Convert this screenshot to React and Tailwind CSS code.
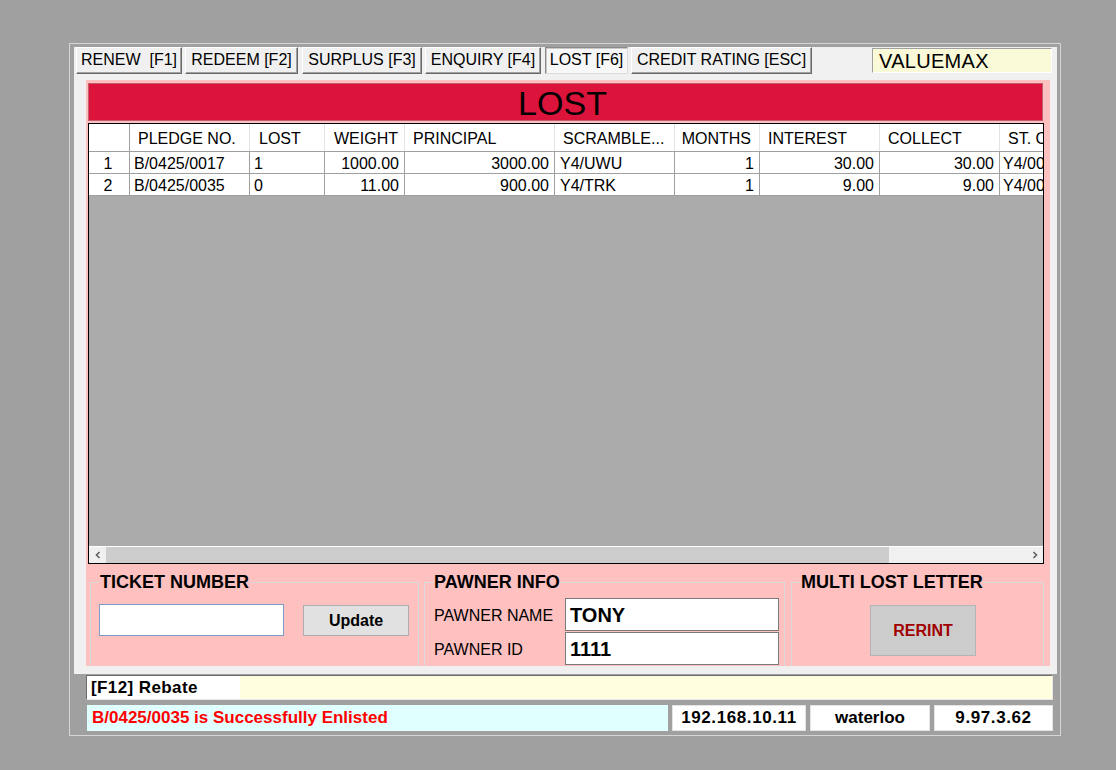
import React from "react";

const cols = [
  { key: "n", label: "", w: "w-[41px]", h: "", d: "justify-center pr-[2px]" },
  { key: "p", label: "PLEDGE NO.", w: "w-[120px]", h: "justify-start pl-[8px]", d: "justify-start pl-[4px]" },
  { key: "l", label: "LOST", w: "w-[75px]", h: "justify-start pl-[9px]", d: "justify-start pl-[4px]" },
  { key: "w", label: "WEIGHT", w: "w-[80px]", h: "justify-end pr-[6px]", d: "justify-end pr-[5px]" },
  { key: "pr", label: "PRINCIPAL", w: "w-[150px]", h: "justify-start pl-[8px]", d: "justify-end pr-[5px]" },
  { key: "s", label: "SCRAMBLE...", w: "w-[120px]", h: "justify-start pl-[8px]", d: "justify-start pl-[5px]" },
  { key: "m", label: "MONTHS", w: "w-[85px]", h: "justify-end pr-[8px]", d: "justify-end pr-[5px]" },
  { key: "i", label: "INTEREST", w: "w-[120px]", h: "justify-start pl-[8px]", d: "justify-end pr-[5px]" },
  { key: "c", label: "COLLECT", w: "w-[120px]", h: "justify-start pl-[8px]", d: "justify-end pr-[5px]" },
  { key: "st", label: "ST. CODE", w: "w-[120px]", h: "justify-start pl-[8px]", d: "justify-start pl-[3px]" },
];

const rows = [
  { n: "1", p: "B/0425/0017", l: "1", w: "1000.00", pr: "3000.00", s: "Y4/UWU", m: "1", i: "30.00", c: "30.00", st: "Y4/0017" },
  { n: "2", p: "B/0425/0035", l: "0", w: "11.00", pr: "900.00", s: "Y4/TRK", m: "1", i: "9.00", c: "9.00", st: "Y4/0035" },
];

const tabs = [
  { t: "RENEW  [F1]", w: "w-[106px]", ml: "ml-0" },
  { t: "REDEEM [F2]", w: "w-[113px]", ml: "ml-[3px]" },
  { t: "SURPLUS [F3]", w: "w-[120px]", ml: "ml-[4px]" },
  { t: "ENQUIRY [F4]", w: "w-[116px]", ml: "ml-[3px]" },
  { t: "LOST [F6]", w: "w-[83px]", ml: "ml-[4px]", active: true },
  { t: "CREDIT RATING [ESC]", w: "w-[181px]", ml: "ml-[3px]" },
];

function Tab({ t, w, ml, active }) {
  const base = "h-[27px] flex items-center justify-center pb-[1px] text-[16px] text-black whitespace-pre border";
  const style = active
    ? "bg-[#f7f7f7] border-t-[#8a8a8a] border-l-[#8a8a8a] border-r-[#dcdcdc] border-b-[#dcdcdc] shadow-[inset_1px_1px_0_#c8c8c8]"
    : "bg-[#f0f0f0] border-t-white border-l-white border-r-[#696969] border-b-[#696969] shadow-[inset_-1px_-1px_0_#a0a0a0]";
  return <div className={`${base} ${style} ${w} ${ml}`}>{t}</div>;
}

export default function App() {
  return (
    <div className="w-[1116px] h-[770px] bg-[#a0a0a0] overflow-hidden pt-[43px] pl-[69px] font-['Liberation_Sans',Arial,sans-serif]">
      <div className="w-[992px] h-[693px] border border-[#d6d6d6] pl-[4px] pt-[3px] pr-[3px] flex flex-col">
        {/* main panel */}
        <div className="h-[627px] bg-[#f0f0f0] flex flex-col">
          {/* tabs */}
          <div className="flex items-start pl-[2px]">
            {tabs.map((tb) => (
              <Tab key={tb.t} {...tb} />
            ))}
            <div className="ml-[60px] mt-[1px] w-[180px] h-[25px] bg-[#fafad8] border-t border-l border-t-[#a0a0a0] border-l-[#a0a0a0] border-r border-b border-r-white border-b-white flex items-center pl-[6px] text-[20px] tracking-[0.3px] text-black">
              VALUEMAX
            </div>
          </div>
          {/* pink panel */}
          <div className="ml-[12px] mt-[6px] w-[964px] h-[586px] bg-[#ffc0c0] overflow-hidden flex flex-col">
            <div className="ml-[2px] mt-[3px] w-[955px] h-[38px] bg-[#dc143c] border border-[#c0606f] flex items-center justify-center pt-[1px] text-[34px] leading-none text-black">
              <span className="-ml-[6px]">LOST</span>
            </div>
            {/* grid */}
            <div className="ml-[2px] mt-[2px] w-[956px] h-[441px] border border-black bg-[#ababab] flex flex-col overflow-hidden">
              <div className="flex-1 overflow-hidden">
                <div className="flex h-[28px] bg-white border-b border-[#a0a0a0] w-max">
                  {cols.map((c) => (
                    <div
                      key={c.key}
                      className={`${c.w} shrink-0 h-full flex items-center pt-[2px] text-[16px] text-black border-r ${c.key === "n" ? "border-[#a0a0a0]" : "border-[#e3e3e3]"} ${c.h}`}
                    >
                      {c.label}
                    </div>
                  ))}
                </div>
                {rows.map((r) => (
                  <div key={r.n} className="flex h-[22px] bg-white border-b border-[#a0a0a0] w-max">
                    {cols.map((c) => (
                      <div
                        key={c.key}
                        className={`${c.w} shrink-0 h-full flex items-center pt-[2px] text-[16px] text-black border-r border-[#a0a0a0] ${c.d} whitespace-nowrap`}
                      >
                        {r[c.key]}
                      </div>
                    ))}
                  </div>
                ))}
              </div>
              {/* scrollbar */}
              <div className="h-[17px] bg-[#f0f0f0] border-t border-white flex items-center">
                <div className="w-[17px] h-full flex items-center justify-center">
                  <svg width="8" height="8" viewBox="0 0 8 8">
                    <path d="M5.5 1 L2.5 4 L5.5 7" fill="none" stroke="#606060" strokeWidth="1.6" />
                  </svg>
                </div>
                <div className="w-[783px] h-full bg-[#cdcdcd]" />
                <div className="flex-1" />
                <div className="w-[17px] h-full flex items-center justify-center">
                  <svg width="8" height="8" viewBox="0 0 8 8">
                    <path d="M2.5 1 L5.5 4 L2.5 7" fill="none" stroke="#606060" strokeWidth="1.6" />
                  </svg>
                </div>
              </div>
            </div>
            {/* bottom fieldsets */}
            <div className="flex items-stretch pl-[4px] mt-[9px] flex-1">
              <fieldset className="w-[329px] shrink-0 border border-b-0 border-[#dadada] pl-[8px]">
                <legend className="px-[1px] text-[18px] leading-[18px] font-bold text-black">TICKET NUMBER</legend>
                <div className="flex items-start mt-[13px]">
                  <div className="w-[185px] h-[32px] bg-white border border-[#7a9cc8]" />
                  <div className="ml-[19px] mt-[1px] w-[106px] h-[31px] bg-[#e1e1e1] border border-[#adadad] flex items-center justify-center text-[16px] font-bold text-black">
                    Update
                  </div>
                </div>
              </fieldset>
              <fieldset className="ml-[5px] w-[361px] shrink-0 border border-b-0 border-[#dadada] pl-[9px]">
                <legend className="px-0 text-[18px] leading-[18px] font-bold text-black">PAWNER INFO</legend>
                <div className="flex flex-col mt-[7px] gap-[1px]">
                  <div className="flex items-center">
                    <div className="w-[131px] pt-[3px] text-[16px] text-black">PAWNER NAME</div>
                    <div className="w-[214px] h-[33px] bg-white border border-[#7a7a7a] flex items-center pl-[4px] text-[20px] font-bold text-black">
                      TONY
                    </div>
                  </div>
                  <div className="flex items-center">
                    <div className="w-[131px] pt-[3px] text-[16px] text-black">PAWNER ID</div>
                    <div className="w-[214px] h-[33px] bg-white border border-[#7a7a7a] flex items-center pl-[4px] text-[20px] font-bold text-black">
                      1111
                    </div>
                  </div>
                </div>
              </fieldset>
              <fieldset className="ml-[6px] w-[253px] shrink-0 border border-b-0 border-[#dadada] pl-[9px]">
                <legend className="px-0 text-[18px] leading-[18px] font-bold text-black">MULTI LOST LETTER</legend>
                <div className="ml-[69px] mt-[14px] w-[106px] h-[51px] bg-[#cccccc] border border-[#b4b4b4] flex items-center justify-center text-[16px] font-bold text-[#a00000]">
                  RERINT
                </div>
              </fieldset>
            </div>
          </div>
        </div>
        {/* status row 1 */}
        <div className="mt-[1px] ml-[12px] mr-[4px] h-[25px] flex border-t border-l border-t-[#6d6d6d] border-l-[#6d6d6d] border-b border-r border-b-[#e8e8e8] border-r-[#e8e8e8]">
          <div className="w-[153px] bg-white flex items-center pl-[4px] text-[17px] tracking-[0.4px] font-bold text-black">[F12] Rebate</div>
          <div className="flex-1 bg-[#ffffe0]" />
        </div>
        {/* status row 2 */}
        <div className="mt-[5px] ml-[13px] mr-[4px] h-[26px] flex">
          <div className="w-[581px] bg-[#e0ffff] flex items-center pl-[5px] text-[17px] font-bold text-[#ff0000]">
            B/0425/0035 is Successfully Enlisted
          </div>
          <div className="ml-[4px] w-[134px] bg-white border border-[#e4e4e4] flex items-center justify-center text-[17px] tracking-[0.6px] font-bold text-black">
            192.168.10.11
          </div>
          <div className="ml-[4px] w-[120px] bg-white border border-[#e4e4e4] flex items-center justify-center text-[17px] font-bold text-black">
            waterloo
          </div>
          <div className="ml-[4px] flex-1 bg-white border border-[#e4e4e4] flex items-center justify-center text-[17px] tracking-[0.6px] font-bold text-black">
            9.97.3.62
          </div>
        </div>
      </div>
    </div>
  );
}
